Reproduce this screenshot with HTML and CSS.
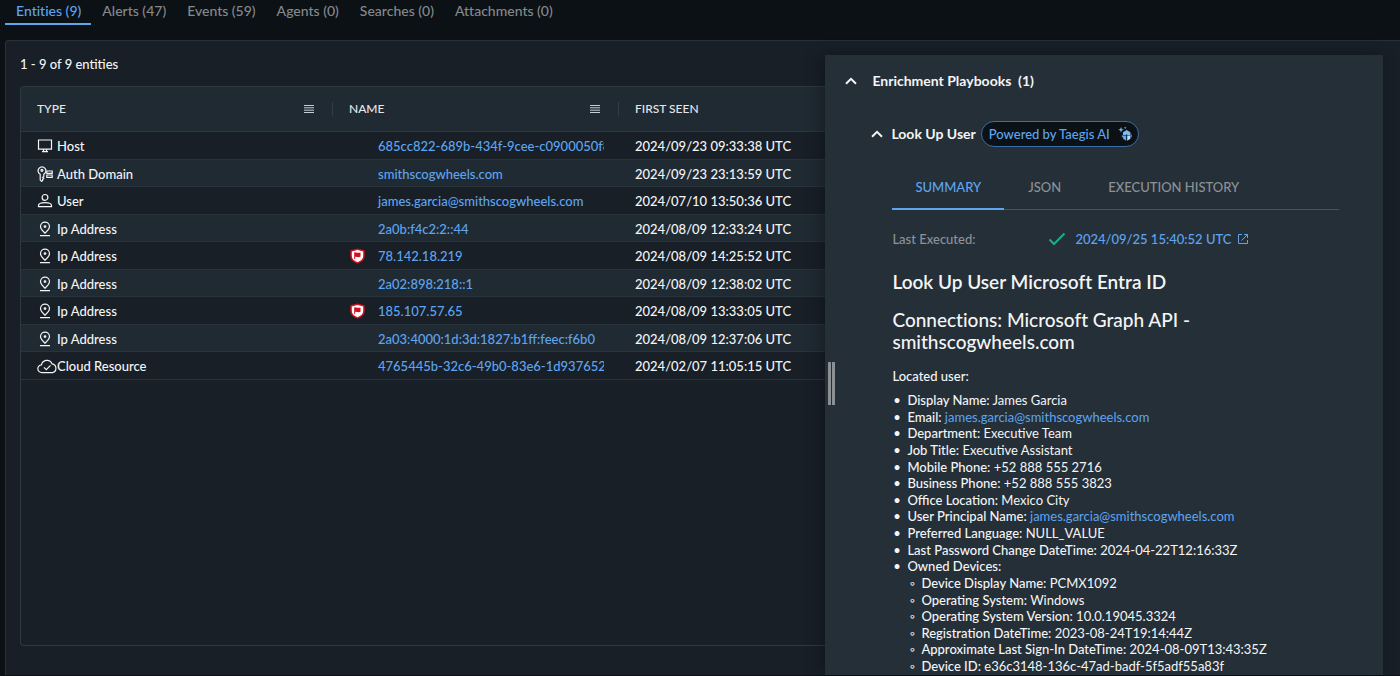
FILE: index.html
```html
<!DOCTYPE html>
<html lang="en">
<head>
<meta charset="utf-8">
<title>Entities</title>
<link rel="stylesheet" href="styles.css">
</head>
<body>
<svg class="sprite" aria-hidden="true">
  <symbol id="i-host" viewBox="0 0 16 16"><path d="M1.500 2h13v9.200h-13z M6.500 11.200v2 M9.500 11.200v2 M5 13.700h6" /></symbol>
  <symbol id="i-key" viewBox="0 0 16 16"><path d="M3.200 8.200A3.900 3.900 0 1 1 6.800 8.200v2.200l-1.200 1 1.200 1-1.200 1.200v.8l-1 1-1.400-1.300z"/><circle cx="4.900" cy="4.300" r="1"/><path d="M9.800 5h5.400v2.400H9.800z M9.800 9h5.400v2.400H9.800z"/></symbol>
  <symbol id="i-user" viewBox="0 0 16 16"><circle cx="8" cy="4.400" r="2.900"/><path d="M1.500 13.700v-1.200C1.500 10.700 4.600 9.600 8 9.600s6.500 1.100 6.500 2.900v1.200z"/></symbol>
  <symbol id="i-pin" viewBox="0 0 16 16"><path d="M8 12.200C5.200 9.700 3.500 7.700 3.500 5.600a4.500 4.500 0 0 1 9 0C12.500 7.700 10.800 9.700 8 12.200z M3 14.600h10"/><circle cx="8" cy="5.600" r=".8"/></symbol>
  <symbol id="i-cloud" viewBox="0 0 20 16"><path d="M5 14.600a3.900 3.900 0 0 1-.5-7.800A5.500 5.500 0 0 1 15 5.800a4.500 4.500 0 0 1 .6 8.800z M7 9.300l2.300 2.300 4.200-4.300"/></symbol>
  <symbol id="i-menu" viewBox="0 0 10 8"><path d="M0 .5h10M0 2.800h10M0 5.200h10M0 7.500h10"/></symbol>
  <symbol id="i-flag" viewBox="0 0 16 16"><path d="M8.500 .5 15.700 2.300V8c0 3.600-3 6.300-7.200 7.700C4.300 14.300 1.300 11.600 1.300 8V2.300z" fill="#d50f1d"/><path d="M8.500 2 14.200 3.400V8c0 2.800-2.200 4.900-5.700 6.200C5 12.900 2.800 10.800 2.800 8V3.400z" fill="#fff"/><path d="M5.200 4.200h1v.4c1.600-.6 2.400.6 5.300-.1v4.300c-2.700.9-3.700-.4-5.300.1v2h-1z" fill="#d50f1d"/></symbol>
  <symbol id="i-up" viewBox="0 0 12 8"><path d="M1 6.800 6 1.800l5 5"/></symbol>
</svg>

<nav class="tabs" role="tablist" aria-label="Investigation">
  <button class="tab active" role="tab" aria-selected="true">Entities (9)</button>
  <button class="tab" role="tab">Alerts (47)</button>
  <button class="tab" role="tab">Events (59)</button>
  <button class="tab" role="tab">Agents (0)</button>
  <button class="tab" role="tab">Searches (0)</button>
  <button class="tab" role="tab">Attachments (0)</button>
</nav>

<main class="board">
  <section class="entities">
    <p class="count">1 - 9 of 9 entities</p>
    <div class="grid">
      <table class="table">
        <colgroup><col class="col-type"><col class="col-name"><col></colgroup>
        <thead>
          <tr>
            <th><div class="head">TYPE<button class="menu" aria-label="Type column menu"><svg><use href="#i-menu"/></svg></button></div></th>
            <th><div class="head">NAME<button class="menu" aria-label="Name column menu"><svg><use href="#i-menu"/></svg></button></div></th>
            <th><div class="head">FIRST SEEN</div></th>
          </tr>
        </thead>
        <tbody>
          <tr><td><div class="kind"><svg><use href="#i-host"/></svg>Host</div></td><td><div class="name"><span class="mark"></span><a href="#">685cc822-689b-434f-9cee-c0900050f8</a></div></td><td>2024/09/23 09:33:38 UTC</td></tr>
          <tr><td><div class="kind"><svg><use href="#i-key"/></svg>Auth Domain</div></td><td><div class="name"><span class="mark"></span><a href="#">smithscogwheels.com</a></div></td><td>2024/09/23 23:13:59 UTC</td></tr>
          <tr><td><div class="kind"><svg><use href="#i-user"/></svg>User</div></td><td><div class="name"><span class="mark"></span><a href="#">james.garcia@smithscogwheels.com</a></div></td><td>2024/07/10 13:50:36 UTC</td></tr>
          <tr><td><div class="kind"><svg><use href="#i-pin"/></svg>Ip Address</div></td><td><div class="name"><span class="mark"></span><a href="#">2a0b:f4c2:2::44</a></div></td><td>2024/08/09 12:33:24 UTC</td></tr>
          <tr><td><div class="kind"><svg><use href="#i-pin"/></svg>Ip Address</div></td><td><div class="name"><span class="mark"><svg><use href="#i-flag"/></svg></span><a href="#">78.142.18.219</a></div></td><td>2024/08/09 14:25:52 UTC</td></tr>
          <tr><td><div class="kind"><svg><use href="#i-pin"/></svg>Ip Address</div></td><td><div class="name"><span class="mark"></span><a href="#">2a02:898:218::1</a></div></td><td>2024/08/09 12:38:02 UTC</td></tr>
          <tr><td><div class="kind"><svg><use href="#i-pin"/></svg>Ip Address</div></td><td><div class="name"><span class="mark"><svg><use href="#i-flag"/></svg></span><a href="#">185.107.57.65</a></div></td><td>2024/08/09 13:33:05 UTC</td></tr>
          <tr><td><div class="kind"><svg><use href="#i-pin"/></svg>Ip Address</div></td><td><div class="name"><span class="mark"></span><a href="#">2a03:4000:1d:3d:1827:b1ff:feec:f6b0</a></div></td><td>2024/08/09 12:37:06 UTC</td></tr>
          <tr><td><div class="kind cloud"><svg><use href="#i-cloud"/></svg>Cloud Resource</div></td><td><div class="name"><span class="mark"></span><a href="#">4765445b-32c6-49b0-83e6-1d937652</a></div></td><td>2024/02/07 11:05:15 UTC</td></tr>
        </tbody>
      </table>
    </div>
  </section>

  <aside class="drawer">
    <div class="handle"></div>
    <button class="fold"><svg><use href="#i-up"/></svg>Enrichment Playbooks&nbsp; (1)</button>
    <div class="playbook">
      <div class="playbook-head">
        <button class="subfold"><svg><use href="#i-up"/></svg>Look Up User</button>
        <span class="badge">Powered by Taegis AI
          <svg viewBox="0 0 14 16"><path d="M3 1l.8 1.900 1.900.8-1.900.8L3 6.400l-.8-1.900L.3 3.700l1.900-.8z" fill="#6fb1f7"/><path d="M7.200.4l.4 1 1 .4-1 .4-.4 1-.4-1-1-.4 1-.4z" fill="#6fb1f7"/><path d="M3.800 9.200h1v2h-1z" fill="#6fb1f7"/><path d="M5 6.200 8.700 4l3.700 2.200v2.800H9.400L8.700 8.200 8 9H5z" fill="#7dbbfb"/><path d="M5 9.600h3.200v5.200L5 12.800z" fill="#5fa5f0"/><path d="M9.200 9.600h3.200v3.200l-3.200 2z" fill="#b9dcff"/><path d="M12.600 8.500h1v2.700h-1z" fill="#6fb1f7"/></svg>
        </span>
      </div>
      <div class="subtabs" role="tablist" aria-label="Playbook">
        <button class="subtab active" role="tab" aria-selected="true">SUMMARY</button>
        <button class="subtab" role="tab">JSON</button>
        <button class="subtab" role="tab">EXECUTION HISTORY</button>
      </div>
      <div class="executed">
        <span class="label">Last Executed:</span>
        <svg class="tick" viewBox="0 0 18 14"><path d="M1.500 7.500 6 12 16.500 1.500"/></svg>
        <a href="#">2024/09/25 15:40:52 UTC</a>
        <svg class="open" viewBox="0 0 12 12"><path d="M5 1.500H1.500v9h9V7M7 1.500h3.500V5M10.500 1.500 4.500 7.500"/></svg>
      </div>
      <h1>Look Up User Microsoft Entra ID</h1>
      <h2>Connections: Microsoft Graph API - smithscogwheels.com</h2>
      <p class="located">Located user:</p>
      <ul class="facts">
        <li><b>Display Name:</b> James Garcia</li>
        <li><b>Email:</b> <a href="#">james.garcia@smithscogwheels.com</a></li>
        <li><b>Department:</b> Executive Team</li>
        <li><b>Job Title:</b> Executive Assistant</li>
        <li><b>Mobile Phone:</b> +52 888 555 2716</li>
        <li><b>Business Phone:</b> +52 888 555 3823</li>
        <li><b>Office Location:</b> Mexico City</li>
        <li><b>User Principal Name:</b> <a href="#">james.garcia@smithscogwheels.com</a></li>
        <li><b>Preferred Language:</b> NULL_VALUE</li>
        <li><b>Last Password Change DateTime:</b> 2024-04-22T12:16:33Z</li>
        <li><b>Owned Devices:</b>
          <ul>
            <li><b>Device Display Name:</b> PCMX1092</li>
            <li><b>Operating System:</b> Windows</li>
            <li><b>Operating System Version:</b> 10.0.19045.3324</li>
            <li><b>Registration DateTime:</b> 2023-08-24T19:14:44Z</li>
            <li><b>Approximate Last Sign-In DateTime:</b> 2024-08-09T13:43:35Z</li>
            <li><b>Device ID:</b> e36c3148-136c-47ad-badf-5f5adf55a83f</li>
          </ul>
        </li>
      </ul>
    </div>
  </aside>
</main>
</body>
</html>
```
FILE: styles.css
```css
* { box-sizing: border-box; }

body {
  margin: 0;
  height: 100vh;
  display: flex;
  flex-direction: column;
  overflow: hidden;
  background: #0c1115;
  color: #f4f5f6;
  font: 500 13px/16px Lato, sans-serif;
}

svg { fill: none; stroke: currentColor; flex: none; }
.sprite { display: none; }
a { color: #5ea5f0; text-decoration: none; }
p, h1, h2, ul { margin: 0; padding: 0; }

button {
  padding: 0;
  border: 0;
  background: none;
  color: inherit;
  font: inherit;
}

.tabs { display: flex; padding-left: 5px; }

.tab {
  height: 25px;
  padding: 0 10px 2px 11px;
  border-bottom: 2px solid transparent;
  color: #85898c;
  font-size: 14px;
  font-variant-ligatures: none;
}

.tab.active { color: #5ea5f0; border-color: #5ea5f0; }

.board {
  flex: 1;
  min-height: 0;
  display: flex;
  margin: 15px 0 1px 5px;
  border: 1px solid #27313a;
  border-width: 1px 0 0 1px;
  border-top-left-radius: 4px;
  background: #181f27;
}

.entities {
  flex: 1;
  min-width: 0;
  display: flex;
  flex-direction: column;
  padding: 15px 0 29px 14px;
}

.count { margin-bottom: 14px; }

.grid {
  flex: 1;
  border: 1px solid #2f3941;
  border-right: 0;
  border-radius: 4px 0 0 4px;
  overflow: hidden;
}

.table { width: 100%; border-collapse: collapse; table-layout: fixed; }
.col-type { width: 312px; }
.col-name { width: 286px; }

th { height: 44px; padding: 0; background: #202a33; text-align: left; font-weight: 500; }

.head {
  height: 14px;
  display: flex;
  align-items: center;
  justify-content: space-between;
  padding: 0 18px 0 16px;
  color: #e4e6e8;
  font-size: 12px;
}

th:not(:last-child) .head { border-right: 1px solid #323c46; }
.menu { display: flex; color: #c9cdd0; }
.menu svg { width: 10px; height: 8px; }

td {
  height: 28px;
  padding: 1px 15px 0 16px;
  border-bottom: 1px solid #29333c;
  white-space: nowrap;
}

thead tr { border-bottom: 1px solid #2b363f; }
tbody tr:nth-child(even) { background: #202a33; }
tbody tr:nth-child(even) td { height: 27px; padding-top: 3px; }

.kind { display: flex; align-items: center; gap: 4px; }
.kind svg { width: 16px; height: 16px; stroke-width: 1.2; }
.kind.cloud { gap: 0; }
.kind.cloud svg { width: 20px; }
.name { display: flex; align-items: center; overflow: hidden; }
.mark { flex: none; width: 29px; height: 16px; }
.mark svg { width: 16px; height: 16px; stroke: none; }

.drawer {
  position: relative;
  flex: 0 0 40%;
  margin: 14px 17px 0 0;
  padding: 18px 44px 0 20px;
  background: #252f38;
  box-shadow: -4px 0 16px rgba(0, 0, 0, .3);
  overflow: hidden;
}

.handle {
  position: absolute;
  left: 3px;
  top: 307px;
  width: 7px;
  height: 43px;
  border: solid #8b8f93;
  border-width: 0 3px;
}

.fold, .subfold { display: flex; align-items: center; font-size: 14px; font-weight: 700; font-variant-ligatures: none; }
.fold { gap: 15px; }
.subfold { gap: 8px; }
.fold svg, .subfold svg { width: 12px; height: 8px; stroke-width: 2; }
.playbook { padding: 32px 0 0 47px; }
.playbook-head { display: flex; gap: 5px; margin-left: -21px; }

.badge {
  display: flex;
  align-items: center;
  gap: 8px;
  height: 26px;
  padding: 0 6px 0 7px;
  border: 1px solid #3a6ea5;
  border-radius: 13px;
  background: #0c1115;
  color: #5ea5f0;
}

.badge svg { width: 14px; height: 16px; stroke: none; }
.subtabs { display: flex; gap: 1px; margin-top: 20px; border-bottom: 1px solid #4a535b; }

.subtab {
  height: 43px;
  padding: 0 23px 1px;
  margin-bottom: -1px;
  border-bottom: 2px solid transparent;
  color: #8c9297;
}

.subtab.active { color: #5ea5f0; border-color: #5ea5f0; }
.executed { display: flex; align-items: center; margin: 21px 0 24px; }
.executed .label { width: 156px; color: #8c9297; }
.tick { width: 18px; height: 14px; margin-right: 9px; stroke: #1fae84; stroke-width: 2; }
.open { width: 12px; height: 12px; margin-left: 5px; color: #5ea5f0; }
h1, h2 { font-size: 19px; line-height: 22px; font-variant-ligatures: none; }
h1 { margin-bottom: 16px; font-weight: 600; }
h2 { margin-bottom: 15px; font-weight: 500; }
.located { margin-bottom: 8px; }
.facts { padding-left: 15px; font-weight: 400; line-height: 1.28; list-style-type: "•\00a0\00a0"; }
.facts ul { padding-left: 14px; list-style-type: "◦\00a0\00a0"; }
.facts b { font-weight: 500; }
```
